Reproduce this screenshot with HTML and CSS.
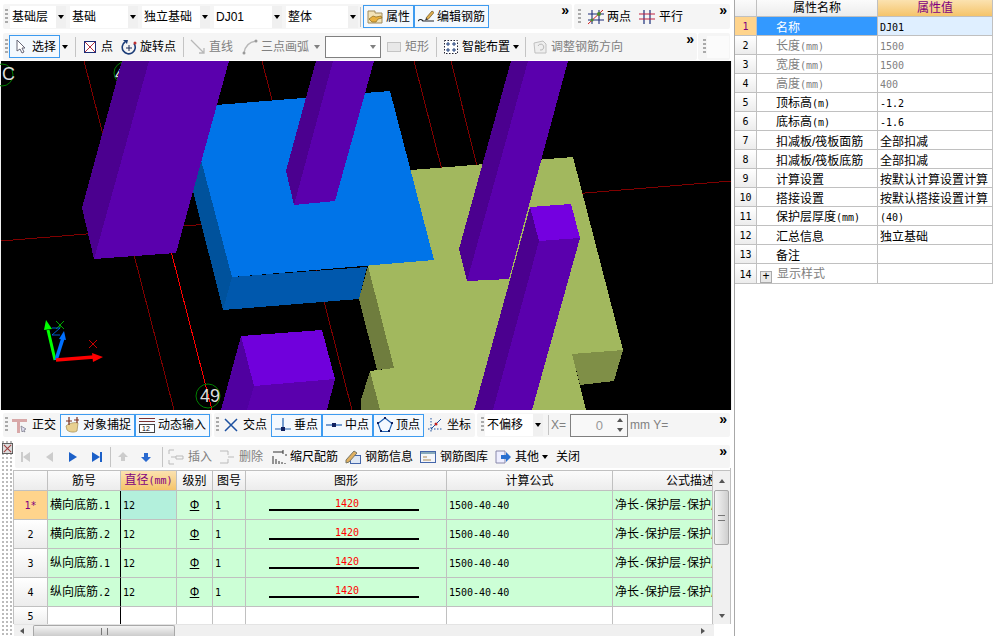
FILE: index.html
```html
<!DOCTYPE html>
<html lang="zh">
<head>
<meta charset="utf-8">
<title>钢筋编辑</title>
<link rel="stylesheet" href="styles.css">
</head>
<body>
<div class="app">
<div class="main">

<div class="row row1">
  <div class="band b1a">
    <span class="grip m2"></span>
    <div class="combos m2">
      <div class="combo w56"><span class="val">基础层</span><span class="drop"><i class="caret"></i></span></div>
      <div class="combo w68"><span class="val">基础</span><span class="drop"><i class="caret"></i></span></div>
      <div class="combo w68"><span class="val">独立基础</span><span class="drop"><i class="caret"></i></span></div>
      <div class="combo w68"><span class="val">DJ01</span><span class="drop"><i class="caret"></i></span></div>
      <div class="combo w72"><span class="val">整体</span><span class="drop"><i class="caret"></i></span></div>
    </div>
    <span class="sep m2"></span>
    <div class="btn m2"><svg class="ic" viewBox="0 0 16 16"><path d="M1 2h7v2h7v10H1z" fill="#f3e3b8" stroke="#a08a5a"/><path d="M2 10l4-3 3 1 5-1 1 2-4 1-2 3H5z" fill="#e8b040" stroke="#8a6a20" stroke-width=".7"/></svg><span>属性</span></div>
    <div class="btn"><svg class="ic" viewBox="0 0 16 16"><path d="M8 9l6-7 2 1.5-6 7z" fill="#e0b050" stroke="#7a6030" stroke-width=".8"/><path d="M8 9l-1 2.5 3-1z" fill="#333"/><path d="M0 12c2-2 3-2 5 0h11" fill="none" stroke="#222" stroke-width="1.2"/></svg><span>编辑钢筋</span></div>
    <span class="more">»</span>
  </div>
  <div class="band b1b">
    <span class="grip m4"></span>
    <div class="tool m7"><svg class="ic" viewBox="0 0 16 16"><path d="M4 1v14M11 1v14M0 5h16M0 11h16" stroke="#1c2d78" stroke-width="1.1" fill="none"/><path d="M0 15L15 1" stroke="#d02020"/><circle cx="11" cy="5" r="2" fill="#4a8a2a"/><circle cx="4" cy="11" r="1.5" fill="#4a8a2a"/></svg><span>两点</span></div>
    <div class="tool g4 m8"><svg class="ic" viewBox="0 0 16 16"><path d="M5 1v14M11 1v14" stroke="#1c2d78" stroke-width="1.2"/><path d="M0 5h16M0 10h16" stroke="#c02040" stroke-width="1.2"/></svg><span>平行</span></div>
    <span class="more">»</span>
  </div>
</div>

<div class="row row2">
  <div class="band b2a">
    <span class="grip m2"></span>
    <div class="btn m1"><svg class="ic" viewBox="0 0 16 16"><path d="M4 1v11l3-2 2 4 2-1-2-4h3z" fill="#fff" stroke="#667"/></svg><span>选择</span></div>
    <i class="caret m2"></i>
    <span class="sep m7"></span>
    <div class="tool m6"><svg class="ic" viewBox="0 0 16 16"><rect x="2.5" y="2.5" width="11" height="11" fill="#fff" stroke="#1c2d78"/><path d="M3 3l10 10M13 3L3 13" stroke="#b03040"/></svg><span>点</span></div>
    <div class="tool m8"><svg class="ic" viewBox="0 0 16 16"><path d="M4 3a6.500 6.500 0 1 0 9 1.500" fill="none" stroke="#1c3d78" stroke-width="1.600"/><path d="M2 1l5 0-1 4z" fill="#1c3d78"/><path d="M5 9h6M8 6v6" stroke="#1c2d58"/><circle cx="14" cy="4" r="1.500" fill="#c03030"/></svg><span>旋转点</span></div>
    <span class="sep m7"></span>
    <div class="tool dim m6"><svg class="ic" viewBox="0 0 16 16"><path d="M1 1l13 13M14 9v5H9" fill="none" stroke="#b8b8b8" stroke-width="1.300"/></svg><span>直线</span></div>
    <div class="tool dim m9"><svg class="ic" viewBox="0 0 16 16"><path d="M2 14C3 7 7 3 14 2" fill="none" stroke="#b8b8b8" stroke-width="1.500"/><circle cx="2" cy="14" r="1.500" fill="#999"/><circle cx="14" cy="2" r="1.500" fill="#999"/></svg><span>三点画弧</span></div>
    <i class="caret gray m5"></i>
    <div class="combo field w56 m5"><span class="val"></span><i class="caret gray"></i></div>
    <div class="tool dim m5"><svg class="ic" viewBox="0 0 16 16"><rect x="1.500" y="3.500" width="13" height="9" fill="#e8e8e8" stroke="#c4c4c4"/></svg><span>矩形</span></div>
    <span class="sep m7"></span>
    <div class="tool m6"><svg class="ic" viewBox="0 0 16 16"><rect x="1.500" y="1.500" width="13" height="13" fill="#fff" stroke="#223" stroke-dasharray="1.500 1.500"/><path d="M5 3v4M3 5h4M11 3v4M9 5h4M5 9v4M3 11h4M11 9v4M9 11h4" stroke="#1c3d78"/></svg><span>智能布置</span></div>
    <i class="caret m3"></i>
    <span class="sep m6"></span>
    <div class="tool dim m6"><svg class="ic" viewBox="0 0 16 16"><path d="M2 4l9-2 3 3v9H3z" fill="#eee" stroke="#c0c0c0"/><path d="M6 7a3 3 0 1 1 2 4" fill="none" stroke="#b8b8b8"/></svg><span>调整钢筋方向</span></div>
    <span class="more">»</span>
  </div>
  <div class="band b2b"><span class="grip m5"></span><span class="blank"></span></div>
</div>

<svg class="scene" viewBox="0 61 732 349" shape-rendering="crispEdges">
  <rect x="1" y="61" width="730" height="349" fill="#000"/>
  <g fill="none" stroke="#800000">
    <path d="M84 61L174 410M262 61L352 410M414 61L442 170M451 61L478 170M1 241L731 181"/>
  </g>
  <path d="M122 61L212 410" stroke="#ff0000" fill="none"/>
  <g fill="none" stroke="#008000" shape-rendering="auto">
    <circle cx="2" cy="75" r="11"/><circle cx="125" cy="73" r="11"/><circle cx="208" cy="396" r="12"/>
  </g>
  <text class="mark" x="2" y="80">C</text>
  <text class="mark" x="115" y="80">4</text>
  <text class="mark" x="200" y="402">49</text>

  <polygon points="411,170 573,157 623,350 572,354 586,410 380,410 370,371 394,368 368,266" fill="#a2b85e"/>
  <polygon points="368,266 359,299 377,370 394,368" fill="#6f7d3e"/>
  <polygon points="370,371 361,400 361,410 380,410" fill="#6f7d3e"/>
  <polygon points="572,354 623,350 614,381 580,385" fill="#7f8f47"/>

  <polygon points="201,160 193,191 223,310 232,277" fill="#00529c"/>
  <polygon points="232,277 223,310 359,299 367,267" fill="#0058ad"/>
  <polygon points="216,105 390,91 434,260 232,277 201,160" fill="#0074e8"/>

  <polygon points="82,208 94,259 149,61 122,61" fill="#4b008f"/>
  <polygon points="94,259 176,253 229,61 149,61" fill="#5a00ad"/>
  <polygon points="286,171 294,205 333,61 316,61" fill="#4b008f"/>
  <polygon points="294,205 335,201 374,61 333,61" fill="#5a00ad"/>
  <polygon points="459,249 467,281 528,61 511,61" fill="#4b008f"/>
  <polygon points="467,281 509,279 568,61 528,61" fill="#5a00ad"/>
  <polygon points="530,207 539,241 493,410 474,410" fill="#4b008f"/>
  <polygon points="539,241 580,238 532,410 493,410" fill="#5a00ad"/>
  <polygon points="530,207 571,204 580,238 539,241" fill="#7400e0"/>
  <polygon points="241,336 254,386 247,410 221,410" fill="#5000a0"/>
  <polygon points="254,386 335,379 327,410 247,410" fill="#5a00ad"/>
  <polygon points="241,336 322,330 335,379 254,386" fill="#7000dc"/>

  <g shape-rendering="auto">
    <path d="M55 360L48 330" stroke="#00ff00" stroke-width="3"/>
    <path d="M46 320l-2 10 8-1z" fill="#00ff00"/>
    <path d="M56 360l7-22" stroke="#0070ff" stroke-width="3.500"/>
    <path d="M64 331l-5 8 7 1z" fill="#0070ff"/>
    <path d="M56 360l38-3" stroke="#ff0000" stroke-width="3.500"/>
    <path d="M103 357l-11-4 1 9z" fill="#ff0000"/>
    <path d="M56 321l8 8M64 321l-8 8M60 325v3" stroke="#00d000" fill="none" stroke-width=".8"/>
    <path d="M52 328h8l-8 7h8" stroke="#0070ff" fill="none" stroke-width=".8"/>
    <path d="M89 340l8 8M97 340l-8 8" stroke="#ff0000" fill="none" stroke-width=".8"/>
  </g>
</svg>

<div class="row row3">
  <div class="band b3a">
    <span class="grip m2"></span>
    <div class="tool g4 m4"><svg class="ic" viewBox="0 0 16 16"><path d="M0 2h15v3H0zM5 5h3v11H5z" fill="#d8a8a8"/><path d="M9 9l5 3-2 1 1 2-2-1-1 1z" fill="#dde" stroke="#667" stroke-width=".6"/></svg><span>正交</span></div>
    <div class="btn m4"><svg class="ic" viewBox="0 0 16 16"><path d="M2 9c3-3 9-4 12-3l-1 8c-3 2-8 1-10-1z" fill="#e8d090" stroke="#a08a50" stroke-width=".7"/><path d="M5 0v8M13 0v6" stroke="#7a3020" stroke-width="1.200"/><path d="M2 4h6M10 3h5" stroke="#7a3020"/></svg><span>对象捕捉</span></div>
    <div class="btn"><svg class="ic" viewBox="0 0 16 16"><path d="M0 1.500h16M0 4.500h16" stroke="#7a3030"/><rect x=".5" y="7.500" width="15" height="8" fill="#fff" stroke="#444"/><text class="ictext" x="3" y="14">12</text></svg><span>动态输入</span></div>
  </div>
  <div class="band b3b">
    <span class="grip m2"></span>
    <div class="tool g4 m4"><svg class="ic" viewBox="0 0 16 16"><path d="M2 2l12 12M14 2L2 14" stroke="#1c50a0" stroke-width="1.500"/></svg><span>交点</span></div>
    <div class="btn m4"><svg class="ic" viewBox="0 0 16 16"><path d="M0 12h16M8 1v11" stroke="#2060b0" stroke-width="1.200"/><rect x="6" y="10" width="4" height="4" fill="#102060"/></svg><span>垂点</span></div>
    <div class="btn"><svg class="ic" viewBox="0 0 16 16"><path d="M0 8h16" stroke="#2060b0" stroke-width="1.200"/><rect x="6" y="6" width="4" height="4" fill="#102060"/></svg><span>中点</span></div>
    <div class="btn"><svg class="ic" viewBox="0 0 16 16"><path d="M8 1l7 5.500-3 8H4l-3-8z" fill="none" stroke="#2060b0" stroke-width="1.200"/><rect x="7" y="0" width="2" height="2" fill="#102060"/><rect x="0" y="5" width="2" height="2" fill="#102060"/><rect x="14" y="5" width="2" height="2" fill="#102060"/><rect x="3" y="13" width="2" height="2" fill="#102060"/><rect x="11" y="13" width="2" height="2" fill="#102060"/></svg><span>顶点</span></div>
    <div class="tool g4 m3"><svg class="ic" viewBox="0 0 16 16"><path d="M4 1v14M1 12h14" stroke="#1c50a0" stroke-dasharray="1.500 1.500" fill="none"/><path d="M4 12l5-5 5-5" stroke="#1c50a0" fill="none"/><circle cx="9" cy="7" r="1.500" fill="#c02020"/></svg><span>坐标</span></div>
  </div>
  <div class="band b3c">
    <span class="grip m4"></span>
    <div class="combo w58 m1"><span class="val">不偏移</span><span class="drop"><i class="caret"></i></span></div>
    <span class="sep m5"></span>
    <span class="latin gray m2">X=</span>
    <div class="spin m4"><span class="spinval">0</span><span class="spinbtns"><i class="up"></i><i class="down"></i></span></div>
    <span class="latin gray m2">mm Y=</span>
    <span class="more">»</span>
  </div>
</div>

<div class="panel">
  <div class="strip"><svg class="closeic" viewBox="0 0 12 12"><rect x=".5" y=".5" width="11" height="11" fill="#ddd" stroke="#555"/><path d="M2 2l8 8M10 2l-8 8" stroke="#a04040" stroke-width="1.200"/></svg></div>
  <div class="gridside">
    <div class="band gridbar">
      <svg class="ic m2" viewBox="0 0 16 16"><rect x="4" y="3" width="2" height="10" fill="#ccc"/><path d="M13 3v10L6 8z" fill="#ccc"/></svg>
      <svg class="ic m8" viewBox="0 0 16 16"><path d="M12 3v10L5 8z" fill="#ccc"/></svg>
      <svg class="ic m8" viewBox="0 0 16 16"><path d="M4 3v10l8-5z" fill="#1c60c8"/></svg>
      <svg class="ic m8" viewBox="0 0 16 16"><path d="M3 3v10l8-5z" fill="#1c60c8"/><rect x="11" y="3" width="2" height="10" fill="#1c60c8"/></svg>
      <span class="sep m5"></span>
      <svg class="ic m4" viewBox="0 0 16 16"><path d="M8 3l5 5h-3v4H6V8H3z" fill="#ccc"/></svg>
      <svg class="ic m7" viewBox="0 0 16 16"><path d="M8 13l5-5h-3V4H6v4H3z" fill="#2a6ad0"/></svg>
      <span class="sep m8"></span>
      <div class="tool g4 dim m5"><svg class="ic" viewBox="0 0 16 16"><path d="M1 1h5M1 1v4M1 11v4h5M8 7h7v3H8z" fill="none" stroke="#bbb"/><path d="M3 8h5" stroke="#bbb"/></svg><span>插入</span></div>
      <div class="tool g4 dim m7"><svg class="ic" viewBox="0 0 16 16"><path d="M1 2h8v4M1 14h8v-4M9 8h6" fill="none" stroke="#bbb"/></svg><span>删除</span></div>
      <div class="tool g2 m9"><svg class="ic" viewBox="0 0 16 16"><path d="M1 3h10M11 1v4M14 5v2M1 7v8M4 10v5M7 12v3M10 13v2M13 14v1" fill="none" stroke="#333"/></svg><span>缩尺配筋</span></div>
      <div class="tool g4 m7"><svg class="ic" viewBox="0 0 16 16"><rect x="5.500" y="6.500" width="10" height="8" fill="#dfe8f4" stroke="#46a"/><path d="M1 11l8-9 3 2-8 9-3 1z" fill="#e0b060" stroke="#776"/></svg><span>钢筋信息</span></div>
      <div class="tool g4 m7"><svg class="ic" viewBox="0 0 16 16"><rect x=".5" y="2.500" width="15" height="11" fill="#f4f6fa" stroke="#46a"/><rect x="1" y="3" width="14" height="2" fill="#8ab"/><path d="M3 8h4M3 11h8" stroke="#a85"/></svg><span>钢筋图库</span></div>
      <div class="tool g4 m7"><svg class="ic" viewBox="0 0 16 16"><path d="M1 2h9v12H1z" fill="#eef" stroke="#88a"/><path d="M6 6h5V3l5 5-5 5v-3H6z" fill="#2a70d0"/></svg><span>其他</span></div>
      <i class="caret m3"></i>
      <span class="plain m8">关闭</span>
      <span class="more">»</span>
    </div>
    <div class="gridarea">
      <div class="tablewrap">
        <table class="rebar">
          <colgroup><col class="k0"><col class="k1"><col class="k2"><col class="k3"><col class="k4"><col class="k5"><col class="k6"><col class="k7"></colgroup>
          <thead><tr><th></th><th class="plainl">筋号</th><th class="hot">直径<span class="num">(mm)</span></th><th>级别</th><th>图号</th><th>图形</th><th>计算公式</th><th class="left">公式描述</th></tr></thead>
          <tbody>
            <tr class="on"><th class="rowno hot2"><span class="num">1*</span></th><td class="barline">横向底筋<span class="num">.1</span></td><td class="sel"><span class="num">12</span></td><td class="ctr"><span class="grade">Φ</span></td><td><span class="num">1</span></td><td><div class="shape"><span class="num">1420</span></div></td><td><span class="num">1500-40-40</span></td><td>净长<span class="num">-</span>保护层<span class="num">-</span>保护层</td></tr>
            <tr class="on"><th class="rowno"><span class="num">2</span></th><td class="barline">横向底筋<span class="num">.2</span></td><td><span class="num">12</span></td><td class="ctr"><span class="grade">Φ</span></td><td><span class="num">1</span></td><td><div class="shape"><span class="num">1420</span></div></td><td><span class="num">1500-40-40</span></td><td>净长<span class="num">-</span>保护层<span class="num">-</span>保护层</td></tr>
            <tr class="on"><th class="rowno"><span class="num">3</span></th><td class="barline">纵向底筋<span class="num">.1</span></td><td><span class="num">12</span></td><td class="ctr"><span class="grade">Φ</span></td><td><span class="num">1</span></td><td><div class="shape"><span class="num">1420</span></div></td><td><span class="num">1500-40-40</span></td><td>净长<span class="num">-</span>保护层<span class="num">-</span>保护层</td></tr>
            <tr class="on"><th class="rowno"><span class="num">4</span></th><td class="barline">纵向底筋<span class="num">.2</span></td><td><span class="num">12</span></td><td class="ctr"><span class="grade">Φ</span></td><td><span class="num">1</span></td><td><div class="shape"><span class="num">1420</span></div></td><td><span class="num">1500-40-40</span></td><td>净长<span class="num">-</span>保护层<span class="num">-</span>保护层</td></tr>
            <tr class="last"><th class="rowno"><span class="num">5</span></th><td class="barline"></td><td></td><td></td><td></td><td></td><td></td><td></td></tr>
          </tbody>
        </table>
      </div>
      <div class="vscroll"><i class="up"></i><div class="vthumb"><span class="lines"></span></div><i class="down"></i></div>
    </div>
    <div class="hscroll"><i class="lft"></i><div class="hthumb"><span class="hlines"></span></div><i class="rgt"></i></div>
  </div>
</div>
</div>

<aside class="props">
  <table class="attr">
    <colgroup><col class="p0"><col class="p1"><col class="p2"></colgroup>
    <thead><tr><th></th><th>属性名称</th><th class="hot">属性值</th></tr></thead>
    <tbody>
      <tr class="cur"><th class="rowno hot2"><span class="num">1</span></th><td class="nm">名称</td><td class="vl"><span class="num">DJ01</span></td></tr>
      <tr class="off"><th class="rowno"><span class="num">2</span></th><td class="nm">长度<span class="num">(mm)</span></td><td class="vl"><span class="num">1500</span></td></tr>
      <tr class="off"><th class="rowno"><span class="num">3</span></th><td class="nm">宽度<span class="num">(mm)</span></td><td class="vl"><span class="num">1500</span></td></tr>
      <tr class="off"><th class="rowno"><span class="num">4</span></th><td class="nm">高度<span class="num">(mm)</span></td><td class="vl"><span class="num">400</span></td></tr>
      <tr><th class="rowno"><span class="num">5</span></th><td class="nm">顶标高<span class="num">(m)</span></td><td class="vl"><span class="num">-1.2</span></td></tr>
      <tr><th class="rowno"><span class="num">6</span></th><td class="nm">底标高<span class="num">(m)</span></td><td class="vl"><span class="num">-1.6</span></td></tr>
      <tr><th class="rowno"><span class="num">7</span></th><td class="nm">扣减板/筏板面筋</td><td class="vl">全部扣减</td></tr>
      <tr><th class="rowno"><span class="num">8</span></th><td class="nm">扣减板/筏板底筋</td><td class="vl">全部扣减</td></tr>
      <tr><th class="rowno"><span class="num">9</span></th><td class="nm">计算设置</td><td class="vl">按默认计算设置计算</td></tr>
      <tr><th class="rowno"><span class="num">10</span></th><td class="nm">搭接设置</td><td class="vl">按默认搭接设置计算</td></tr>
      <tr><th class="rowno"><span class="num">11</span></th><td class="nm">保护层厚度<span class="num">(mm)</span></td><td class="vl"><span class="num">(40)</span></td></tr>
      <tr><th class="rowno"><span class="num">12</span></th><td class="nm">汇总信息</td><td class="vl">独立基础</td></tr>
      <tr><th class="rowno"><span class="num">13</span></th><td class="nm">备注</td><td class="vl"></td></tr>
      <tr class="off"><th class="rowno"><span class="num">14</span></th><td class="nm"><span class="plus">+</span>显示样式</td><td class="vl"></td></tr>
    </tbody>
  </table>
</aside>
</div>
</body>
</html>
```
FILE: styles.css
```css
* { box-sizing: border-box; }
html, body { margin: 0; padding: 0; height: 100%; overflow: hidden; background: #fff; }
body { font: 12px/16px "Liberation Sans", "Noto Sans CJK SC", sans-serif; color: #000; }
.app { display: flex; width: 997px; height: 636px; }
.main { width: 733px; flex: none; display: flex; flex-direction: column; }

.row { display: flex; padding-left: 3px; gap: 2px; flex: none; }
.row1 { height: 33px; padding-top: 4px; }
.row2 { height: 28px; gap: 1px; }
.row3 { height: 30px; padding-top: 3px; }
.band { display: flex; align-items: center; background: #f5f5f5; border-radius: 2px; position: relative; }
.b1a { width: 569px; height: 25px; }
.b1b { width: 156px; height: 25px; }
.b2a { width: 694px; height: 27px; }
.b2b { width: 32px; height: 27px; }
.b3a { width: 209px; height: 24px; }
.b3b { width: 261px; height: 24px; }
.b3c { width: 253px; height: 24px; }
.blank { width: 22px; height: 22px; background: #fbfbfb; margin-left: 1px; }

.m1 { margin-left: 1px; } .m2 { margin-left: 2px; } .m3 { margin-left: 3px; }
.m4 { margin-left: 4px; } .m5 { margin-left: 5px; } .m6 { margin-left: 6px; }
.m7 { margin-left: 7px; } .m8 { margin-left: 8px; } .m9 { margin-left: 9px; }

.grip { width: 3px; height: 16px; flex: none; background: linear-gradient(#aaa 50%, transparent 50%) 0 0 / 3px 4px; }
.sep { width: 1px; height: 20px; flex: none; background: #c4c4c4; }
.more { position: absolute; right: 3px; top: -1px; font-weight: bold; font-size: 14px; line-height: 14px; }
.caret { display: inline-block; flex: none; width: 0; height: 0; border: 3px solid transparent; border-top: 4px solid #000; border-bottom: 0; }
.caret.gray { border-top-color: #808080; }
.latin { white-space: nowrap; }
.gray { color: #808080; }
.plain { white-space: nowrap; }

.combos { display: flex; gap: 4px; }
.combo { display: flex; align-items: stretch; height: 22px; background: #fff; flex: none; }
.val { flex: 1; padding-left: 2px; line-height: 22px; white-space: nowrap; overflow: hidden; }
.drop { width: 10px; background: #f0f0f0; display: flex; align-items: center; justify-content: center; }
.w56 { width: 56px; } .w58 { width: 58px; } .w68 { width: 68px; } .w72 { width: 72px; }
.field { border: 1px solid #808080; align-items: center; padding-right: 4px; }

.btn { display: flex; align-items: center; gap: 3px; padding: 0 3px; height: 23px; border: 1px solid #3d9bf0; background: #f4f9fe; flex: none; white-space: nowrap; }
.tool { display: flex; align-items: center; gap: 3px; flex: none; white-space: nowrap; }
.g2 { gap: 2px; } .g4 { gap: 4px; }
.dim { color: #808080; }
.ic { width: 16px; height: 16px; flex: none; display: block; }
.ictext { font: 7px "Liberation Sans", sans-serif; fill: #000; }

.scene { display: block; width: 732px; height: 349px; flex: none; background: #f0f0f0; }
.mark { font: 18px "Liberation Sans", sans-serif; fill: #ddd; }

.spin { display: flex; width: 58px; height: 23px; border: 1px solid #808080; background: #f8f8f8; color: #999; flex: none; }
.spinval { flex: 1; text-align: right; line-height: 21px; font-size: 13px; padding-right: 9px; }
.spinbtns { width: 15px; display: flex; flex-direction: column; justify-content: space-around; align-items: center; }
.up, .down, .lft, .rgt { display: block; width: 0; height: 0; border: 3px solid transparent; flex: none; }
.up { border-bottom: 4px solid #555; border-top: 0; }
.down { border-top: 4px solid #555; border-bottom: 0; }
.lft { border-right: 4px solid #555; border-left: 0; }
.rgt { border-left: 4px solid #555; border-right: 0; }

.panel { flex: 1; min-height: 0; display: flex; margin-top: 1px; }
.strip { width: 14px; flex: none; padding: 2px 0 0 2px; background: radial-gradient(circle at 1px 1px, #bbb 1px, transparent 1.3px) 2px 0 / 4px 4px; }
.closeic { width: 11px; height: 11px; display: block; }
.gridside { width: 717px; flex: none; display: flex; flex-direction: column; padding-top: 4px; }
.gridbar { height: 23px; flex: none; margin-left: 1px; width: 715px; }
.gridarea { display: flex; height: 156px; margin-top: 0; border-right: 1px solid #c0c0c0; padding-top: 2px; }
.tablewrap { width: 700px; height: 154px; overflow: hidden; border-top: 1px solid #c0c0c0; border-left: 1px solid #c0c0c0; flex: none; margin-left: -1px; }
.vscroll { flex: 1; background: #f0f0f0; border-top: 1px solid #c0c0c0; display: flex; flex-direction: column; align-items: center; padding: 8px 0 6px; }
.vthumb { width: 15px; height: 55px; margin-top: 7px; border: 1px solid #a8a8a8; border-radius: 2px; background: linear-gradient(90deg, #f4f4f4, #cfcfcf); display: flex; align-items: center; justify-content: center; }
.vscroll .down { margin-top: auto; }
.lines { width: 7px; height: 6px; border-top: 1px solid #777; border-bottom: 1px solid #777; }
.hscroll { height: 12px; flex: 1; display: flex; align-items: center; background: #f0f0f0; padding-left: 6px; margin-right: 17px; border-top: 1px solid #e4e4e4; }
.hthumb { width: 142px; height: 12px; margin-left: 9px; border: 1px solid #a8a8a8; border-bottom: 0; border-radius: 2px 2px 0 0; background: linear-gradient(#f4f4f4, #c8c8c8); display: flex; justify-content: center; align-items: center; }
.hlines { width: 7px; height: 7px; border-left: 1px solid #777; border-right: 1px solid #777; }
.hscroll .rgt { margin-left: auto; margin-right: 9px; }

table { border-collapse: separate; border-spacing: 0; table-layout: fixed; }
th, td { padding: 0; font-weight: normal; white-space: nowrap; overflow: hidden; border-right: 1px solid #c0c0c0; border-bottom: 1px solid #c0c0c0; }
thead th { background: linear-gradient(#fbfbfb, #ececec); text-align: center; }
thead th.hot { background: linear-gradient(#fbe2b0, #f5c46a); color: #800080; }
.rowno { background: linear-gradient(#ffffff, #ececec); text-align: center; }
.rowno.hot2 { background: #ffd48c; color: #800080; }
.num { font-family: "DejaVu Sans Mono", "Liberation Mono", monospace; font-size: 10px; }

.rebar { width: 699px; }
.k0 { width: 34px; } .k1 { width: 73px; } .k2 { width: 56px; } .k3 { width: 36px; }
.k4 { width: 33px; } .k5 { width: 201px; } .k6 { width: 166px; } .k7 { width: 100px; }
.rebar thead tr { height: 20px; }
.rebar tbody tr { height: 29px; }
.rebar tbody tr.last { height: 20px; }
.rebar tbody td { padding-left: 2px; }
.rebar .left { text-align: left; padding-left: 53px; }
.rebar tr.on td { background: #ccffd6; }
.rebar tr.on td.sel { background: #b3f0dc; }
.rebar td.barline { border-right-color: #000; }
.rebar td.ctr { text-align: center; padding-left: 0; }
.grade { text-decoration: underline; }
.shape { width: 150px; margin-left: 21px; height: 14px; margin-bottom: 2px; border-bottom: 2px solid #000; color: #f00; text-align: center; padding-left: 6px; line-height: 12px; }

.props { flex: 1; border-left: 1px solid #a8a8a8; margin-left: 1px; }
.attr { width: 258px; }
.p0 { width: 22px; } .p1 { width: 121px; } .p2 { width: 115px; }
.attr thead tr { height: 17px; }
.attr tbody tr { height: 19px; }
.attr thead th { line-height: 16px; }
.attr tbody th { padding-top: 1px; line-height: 14px; }
.attr tbody td { padding-top: 3px; line-height: 14px; }
.nm { padding-left: 19px; }
.vl { padding-left: 2px; }
.cur .nm { background: #3399ff; color: #fff; }
.cur .vl { background: #dfefff; }
.off td { color: #808080; }
.plus { display: inline-block; width: 12px; height: 12px; margin: 0 5px 0 -16px; border: 1px solid #aaa; background: #e8e8e8; color: #000; line-height: 9px; text-align: center; vertical-align: -2px; font-size: 12px; }
```
